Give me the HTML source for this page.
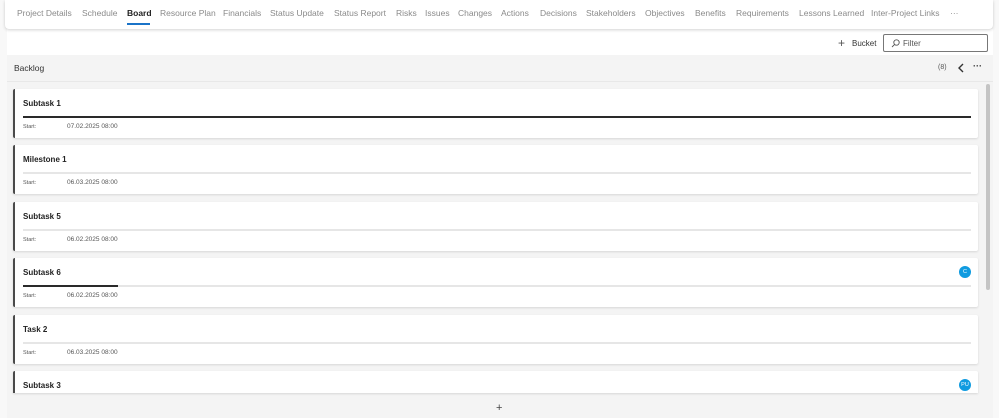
<!DOCTYPE html>
<html><head><style>
*{margin:0;padding:0;box-sizing:border-box}
body{width:999px;height:418px;overflow:hidden;background:#f8f8f8;font-family:"Liberation Sans",sans-serif;position:relative}
.nav{position:absolute;left:5px;top:0;width:988px;height:29px;background:#fff;box-shadow:0 1px 3px rgba(0,0,0,.18);border-radius:0 0 4px 4px}
.t{position:absolute;top:8px;font-size:8.5px;color:#8a8a8a;white-space:nowrap}
.main{position:absolute;left:7px;top:29px;width:986px;height:389px;background:#fff}
.panel{position:absolute;left:7px;top:55px;width:986px;height:363px;background:#f4f4f4}
.card{position:absolute;left:13px;width:965px;height:49px;background:#fff;border-left:2px solid #4a4a4a;border-radius:2px;box-shadow:0 1px 2px rgba(0,0,0,.12)}
.card .n{position:absolute;left:8px;top:10px;font-size:8px;font-weight:bold;color:#222}
.card .bar{position:absolute;left:8px;top:27px;width:948px;height:2px;background:#e6e6e6}
.card .s{position:absolute;left:8px;top:35px;font-size:5.5px;color:#555}
.card .d{position:absolute;left:52px;top:34px;font-size:6.5px;color:#555}
.av{position:absolute;right:7px;top:8px;width:12px;height:12px;border-radius:50%;background:#0f9be0;color:#fff;font-size:5.5px;text-align:center;line-height:12px}
</style></head><body>
<div class="main"></div>
<div class="nav">
<span class="t" style="left:12px">Project Details</span>
<span class="t" style="left:77px">Schedule</span>
<span class="t" style="left:122px;color:#222;font-weight:bold">Board</span>
<div style="position:absolute;left:122px;top:23px;width:23px;height:2px;background:#1a73c8"></div>
<span class="t" style="left:155px">Resource Plan</span>
<span class="t" style="left:218px">Financials</span>
<span class="t" style="left:265px">Status Update</span>
<span class="t" style="left:329px">Status Report</span>
<span class="t" style="left:391px">Risks</span>
<span class="t" style="left:420px">Issues</span>
<span class="t" style="left:453px">Changes</span>
<span class="t" style="left:496px">Actions</span>
<span class="t" style="left:535px">Decisions</span>
<span class="t" style="left:581px">Stakeholders</span>
<span class="t" style="left:640px">Objectives</span>
<span class="t" style="left:690px">Benefits</span>
<span class="t" style="left:731px">Requirements</span>
<span class="t" style="left:794px">Lessons Learned</span>
<span class="t" style="left:866px">Inter-Project Links</span>
<span class="t" style="left:945px">···</span>
</div>
<div style="position:absolute;left:838px;top:36px;font-size:12px;color:#555">+</div>
<div style="position:absolute;left:852px;top:39px;font-size:8px;color:#333">Bucket</div>
<div style="position:absolute;left:883px;top:34px;width:105px;height:18px;border:1px solid #777;border-radius:2px;background:#fff">
<svg style="position:absolute;left:7px;top:4px" width="9" height="9" viewBox="0 0 9 9"><circle cx="5.5" cy="3.5" r="2.7" fill="none" stroke="#555" stroke-width=".9"/><path d="M3.6 5.4L1 8" stroke="#555" stroke-width=".9"/></svg>
<span style="position:absolute;left:19px;top:4px;font-size:8px;color:#555">Filter</span></div>
<div class="panel"></div>
<div style="position:absolute;left:7px;top:81px;width:986px;height:1px;background:#e8e8e8"></div>
<div style="position:absolute;left:14px;top:63px;font-size:8.5px;color:#333">Backlog</div>
<div style="position:absolute;left:938px;top:64px;font-size:7px;color:#555">(8)</div>
<svg style="position:absolute;left:957px;top:63px" width="8" height="10"><path d="M6 1L2 5l4 4" fill="none" stroke="#333" stroke-width="1.4"/></svg>
<div style="position:absolute;left:973px;top:61px;font-size:9px;color:#333;font-weight:bold">···</div>
<div style="position:absolute;left:986px;top:84px;width:4px;height:206px;background:#c4c4c4;border-radius:2px"></div>
<div class="card" style="top:89px"><span class="n">Subtask 1</span><div class="bar" style="background:#2a2a2a"></div><span class="s">Start:</span><span class="d">07.02.2025 08:00</span></div>
<div class="card" style="top:145px"><span class="n">Milestone 1</span><div class="bar"></div><span class="s">Start:</span><span class="d">06.03.2025 08:00</span></div>
<div class="card" style="top:202px"><span class="n">Subtask 5</span><div class="bar"></div><span class="s">Start:</span><span class="d">06.02.2025 08:00</span></div>
<div class="card" style="top:258px"><span class="n">Subtask 6</span><div class="bar"><div style="width:95px;height:2px;background:#2a2a2a"></div></div><span class="s">Start:</span><span class="d">06.02.2025 08:00</span><div class="av">C</div></div>
<div class="card" style="top:315px"><span class="n">Task 2</span><div class="bar"></div><span class="s">Start:</span><span class="d">06.03.2025 08:00</span></div>
<div class="card" style="top:371px;height:22px;border-radius:2px 2px 0 0"><span class="n">Subtask 3</span><div class="av">PU</div></div>
<div style="position:absolute;left:496px;top:402px;font-size:11px;color:#444">+</div>
</body></html>
